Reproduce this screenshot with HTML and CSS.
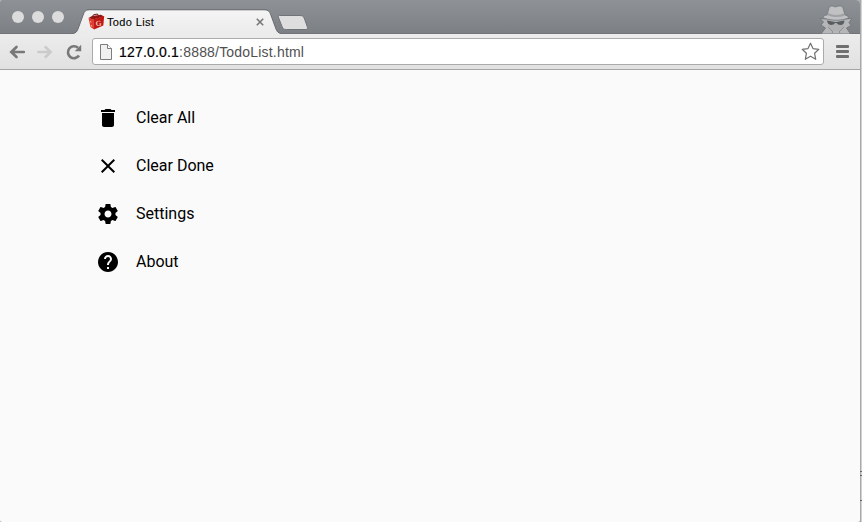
FILE: index.html
```html
<!DOCTYPE html>
<html lang="en">
<head>
<meta charset="utf-8">
<title>Todo List</title>
<link rel="stylesheet" href="styles.css">
</head>
<body>
<div class="desktop">
<div class="window">
  <header class="titlebar">
    <div class="lights"><span></span><span></span><span></span></div>
    <div class="tab">
      <svg class="tab-shape" width="208" height="26" viewBox="0 0 208 26">
        <defs><linearGradient id="tabfill" x1="0" y1="0" x2="0" y2="1"><stop offset="0" stop-color="#f4f4f4"/><stop offset="1" stop-color="#ebebeb"/></linearGradient></defs>
        <path d="M0 24.500C3 24 4 22.500 5 20L10.500 5C11.500 2.500 12.500 1 16 1H192C195 1 196.500 2.500 197.500 5L203 20C204 22.500 205 24 208 24.500V26H0Z" fill="url(#tabfill)"/>
        <path d="M0 24.500C3 24 4 22.500 5 20L10.500 5C11.500 2.500 12.500 .8 16 .8H192C195 .8 196.500 2.500 197.500 5L203 20C204 22.500 205 24 208 24.500" fill="none" stroke="#696c71"/>
      </svg>
      <svg class="favicon" width="17" height="18" viewBox="0 0 17 18">
        <path d="M4.500 3.500L5.500 1.800 9.500 1 10.500 2.800" fill="none" stroke="#6c1512"/>
        <path d="M.5 5L4 3 13 1.800 16 3.500 11 5 5 6.500Z" fill="#8f1713"/>
        <path d="M.5 5L5.500 6.500 6 16.500 2.500 14Z" fill="#e2382a"/>
        <path d="M5.300 6.200L16.200 3 15.300 12.500 6 16.500Z" fill="#c01713"/>
        <path d="M2.500 8L3 9.500M3.500 12L3.800 13.500" stroke="#ffb09c"/>
        <text x="7.500" y="13" class="favicon-letter" transform="rotate(-8 10 10)">G</text>
      </svg>
      <span class="tab-title">Todo List</span>
      <svg class="tab-close" width="8" height="8" viewBox="0 0 8 8"><path d="M.8 .8L7.200 7.200M7.200 .8L.8 7.200" stroke="#777" stroke-width="1.600"/></svg>
    </div>
    <svg class="new-tab" width="34" height="18" viewBox="0 0 34 18"><path d="M3.500 1.500H24C26.500 1.500 27.500 2.500 28.200 4L31.200 12.500C31.800 14.500 31.500 15.500 30 15.500H10.500C8 15.500 7 15 6.200 13L2.700 4C2 2.300 2 1.500 3.500 1.500Z" fill="#dedede" stroke="#707378"/></svg>
    <svg class="incognito" width="36" height="29" viewBox="0 0 36 29">
      <path d="M3 29L7.500 23 3 20 5.500 17 2 13.500 9 14 27 14 34 13.500 31 17.500 33 20.500 28.500 23 32.500 29Z" fill="#b5b6b8" stroke="#74777b" stroke-width=".9"/>
      <path d="M9 14H27L26 21 22 26 14 26 10 21Z" fill="#aeb0b2"/>
      <path d="M9 10L11 3C12 .5 14.500 .8 17.500 2 21 .5 24 .5 25 3L27 10C31 11 31.500 13 29 13.500 22 16 13 15.500 7 13.500 4 12.500 5 10.500 9 10Z" fill="#c0c1c2" stroke="#74777b" stroke-width=".8"/>
      <path d="M10 8C15 10.500 21 10.500 26 8.500L26.700 10.700C21 12.800 15 12.500 9.400 10.300Z" fill="#a0a2a5"/>
      <path d="M9 15.500L17 17 18.500 17 26.500 15.500Q26 20 22.500 20 19.500 20 18.500 18H17Q16 20 13 20 9.500 19.500 9 15.500Z" fill="#5a5d60"/>
      <path d="M10 22L15 27 13 29M26 22L21 27 23 29" fill="none" stroke="#8f9295"/>
    </svg>
  </header>
  <nav class="toolbar">
    <svg class="nav" width="18" height="16" viewBox="0 0 18 16"><path d="M15.800 8H3.500M8.500 3L3.300 8 8.500 13" fill="none" stroke="#787878" stroke-width="2.700" stroke-linecap="round"/></svg>
    <svg class="nav" width="18" height="16" viewBox="0 0 18 16"><path d="M2.200 8H14.500M9.500 3L14.700 8 9.500 13" fill="none" stroke="#cbcbcb" stroke-width="2.500" stroke-linecap="round"/></svg>
    <svg class="nav reload" width="18" height="16" viewBox="0 0 18 16"><path d="M14 11.500A6 6 0 1 1 13 3.800" fill="none" stroke="#787878" stroke-width="2.600"/><path d="M16.200 .8V7.300H9.700Z" fill="#787878"/></svg>
    <div class="address">
      <svg width="12" height="16" viewBox="0 0 12 16"><path d="M.5 .5H7.500L11.500 4.500V15.500H.5Z" fill="#f1f1f1" stroke="#7d7d7d"/><path d="M7.500 .5V4.500H11.500" fill="#fff" stroke="#7d7d7d"/></svg>
      <span class="url"><b>127.0.0.1</b>:8888/TodoList.html</span>
      <svg class="star" width="19" height="19" viewBox="0 0 19 19"><path d="M9.500 1.200L12 6.600 17.800 7.300 13.600 11.300 14.700 17.300 9.500 14.300 4.300 17.300 5.400 11.300 1.200 7.300 7 6.600Z" fill="#fff" stroke="#717171" stroke-width="1.200" stroke-linejoin="round"/></svg>
    </div>
    <div class="menu"><i></i><i></i><i></i></div>
  </nav>
  <main>
    <ul class="actions">
      <li><svg width="24" height="24" viewBox="0 0 24 24"><path d="M6 19c0 1.100.9 2 2 2h8c1.100 0 2-.9 2-2V7H6v12zM19 4h-3.500l-1-1h-5l-1 1H5v2h14V4z"/></svg><span>Clear All</span></li>
      <li><svg width="24" height="24" viewBox="0 0 24 24"><path d="M19 6.410L17.590 5 12 10.590 6.410 5 5 6.410 10.590 12 5 17.590 6.410 19 12 13.410 17.590 19 19 17.590 13.410 12z"/></svg><span>Clear Done</span></li>
      <li><svg width="24" height="24" viewBox="0 0 24 24"><path d="M19.430 12.980c.04-.32.070-.64.070-.98s-.03-.66-.07-.98l2.110-1.650c.19-.15.240-.42.120-.64l-2-3.460c-.12-.22-.39-.3-.61-.22l-2.490 1c-.52-.4-1.080-.73-1.690-.98l-.38-2.650C14.460 2.180 14.250 2 14 2h-4c-.25 0-.46.180-.49.420l-.38 2.650c-.61.250-1.170.590-1.690.98l-2.490-1c-.23-.09-.49 0-.61.220l-2 3.460c-.13.220-.07.490.120.640l2.110 1.650c-.04.320-.07.650-.07.980s.03.660.070.980l-2.110 1.650c-.19.150-.24.420-.12.640l2 3.460c.12.220.390.300.610.220l2.490-1c.52.400 1.080.730 1.690.980l.38 2.650c.03.240.240.420.490.420h4c.25 0 .46-.18.490-.42l.38-2.650c.61-.25 1.170-.59 1.690-.98l2.490 1c.23.090.490 0 .61-.22l2-3.460c.12-.22.070-.49-.12-.64l-2.110-1.650zM12 15.500c-1.930 0-3.500-1.570-3.500-3.500s1.570-3.500 3.500-3.500 3.500 1.570 3.500 3.500-1.570 3.500-3.500 3.500z"/></svg><span>Settings</span></li>
      <li><svg width="24" height="24" viewBox="0 0 24 24"><path d="M12 2C6.480 2 2 6.480 2 12s4.480 10 10 10 10-4.480 10-10S17.520 2 12 2zm1 17h-2v-2h2v2zm2.070-7.750l-.9.920C13.450 12.900 13 13.500 13 15h-2v-.5c0-1.100.450-2.100 1.170-2.830l1.240-1.260c.37-.36.590-.86.590-1.410 0-1.100-.9-2-2-2s-2 .9-2 2H8c0-2.210 1.790-4 4-4s4 1.790 4 4c0 .88-.36 1.680-.93 2.250z"/></svg><span>About</span></li>
    </ul>
  </main>
</div>
<aside class="behind"><i></i><i></i><i></i></aside>
</div>
</body>
</html>
```

FILE: styles.css
```css
* { box-sizing: border-box; }
body { margin: 0; overflow: hidden; background: #aaa; }
svg { display: block; flex: none; }
.desktop { display: flex; width: 862px; height: 522px; background: #aaa; }
.window {
  width: 860px;
  height: 522px;
  overflow: hidden;
  background: #fafafa;
  border-radius: 2px 4px 2px 2px;
}
.titlebar {
  display: flex;
  height: 34px;
  padding-left: 12px;
  background: linear-gradient(#8e9196, #7c7f84);
  box-shadow: inset 0 -1px #707378;
}
.lights { display: flex; gap: 8px; width: 61px; padding-top: 11px; }
.lights span {
  width: 12px;
  height: 12px;
  border-radius: 50%;
  background: #dcdcdc;
}
.tab {
  position: relative;
  display: flex;
  width: 208px;
  height: 26px;
  margin-top: 9px;
  padding-left: 15px;
}
.tab-shape { position: absolute; left: 0; top: 0; }
.favicon { position: relative; margin-top: 4px; }
.favicon-letter { font: bold 7.5px "Liberation Serif", serif; fill: #f3c9bd; }
.tab-title {
  position: relative;
  margin: 6px 0 0 2px;
  color: #000;
  font: 11px/14px "Liberation Sans", sans-serif;
  letter-spacing: .36px;
  -webkit-text-stroke: .1px #000;
  white-space: nowrap;
}
.tab-close { position: absolute; left: 183px; top: 9px; }
.new-tab { margin: 14px 0 0 -5px; }
.incognito { margin: 5px 6px 0 auto; }
.toolbar {
  display: flex;
  align-items: center;
  height: 36px;
  padding: 0 11px 0 8px;
  background: linear-gradient(#ececec, #e1e1e1);
  border-bottom: 1px solid #a5a5a5;
}
.nav { margin-right: 10px; }
.reload { margin: 0 9px 0 1px; }
.address {
  display: flex;
  align-items: center;
  width: 732px;
  height: 27px;
  padding: 0 3px 0 7px;
  background: #fff;
  border: 1px solid #ababab;
  border-radius: 3px;
}
.url {
  margin-left: 7px;
  color: #505050;
  font: 14px/18px "Liberation Sans", sans-serif;
  letter-spacing: .19px;
  white-space: nowrap;
}
.url b { font-weight: 400; color: #000; -webkit-text-stroke: .2px #000; }
.star { margin-left: auto; }
.menu { display: flex; flex-direction: column; gap: 2px; width: 13px; margin-left: auto; }
.menu i { height: 3px; border-radius: 1px; background: #6f6f6f; }
.actions { margin: 0; padding: 24px 0 0 96px; list-style: none; }
.actions li {
  display: flex;
  align-items: center;
  gap: 16px;
  height: 48px;
  color: #000;
  font: 16px/24px Roboto, sans-serif;
}
.behind {
  display: flex;
  flex-direction: column;
  width: 2px;
  height: 522px;
  padding-top: 471px;
  background: linear-gradient(90deg, #a9a9a9 50%, #d2d2d2 50%);
}
.behind i { height: 1px; margin-bottom: 3px; background: #666; }
.behind i:nth-child(2) { margin-bottom: 24px; }
```
